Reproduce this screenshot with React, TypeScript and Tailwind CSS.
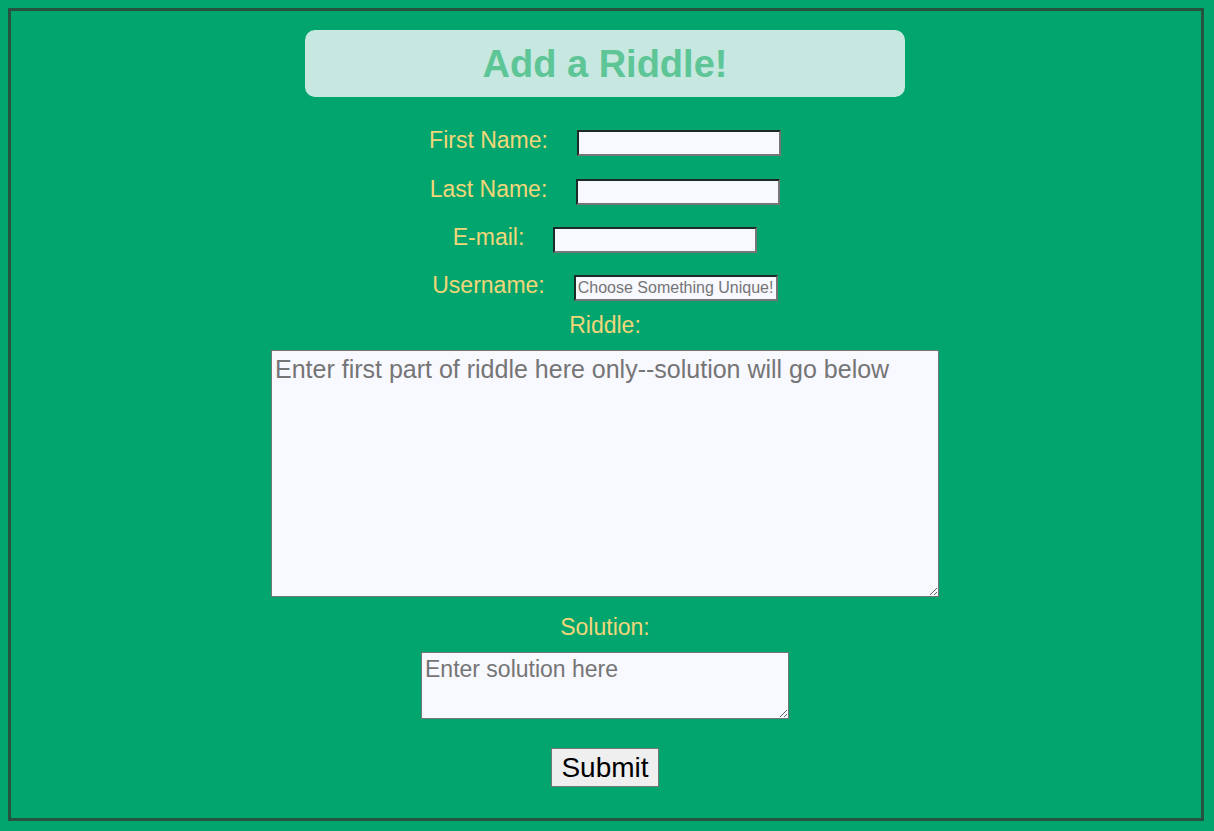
import { useState } from "react";

const labelCls = "text-[23px] leading-[20px] text-[#f1d67a] mb-[6px]";
const inputCls =
    "w-[204px] h-[26px] bg-[#f8f8ff] border-2 border-t-[#1c2b26] border-l-[#1c2b26] border-b-[#767676] border-r-[#767676] px-[2px] text-[16px] text-black placeholder:text-[#757575] outline-none";

function FieldRow({ label, name, placeholder }: { label: string; name: string; placeholder?: string }) {
    return (
        <div className="flex items-center gap-[29px] h-[26px]">
            <label htmlFor={name} className={labelCls}>{label}</label>
            <input id={name} name={name} type="text" placeholder={placeholder} className={inputCls} />
        </div>
    );
}

function App() {
    const [riddle, setRiddle] = useState("");
    const [solution, setSolution] = useState("");

    return (
        <div className="min-h-[831px] bg-[#01a56d] pt-2 pl-2" style={{ fontFamily: '"Liberation Sans", Arial, sans-serif' }}>
            <div className="w-[1196px] h-[813px] border-[3px] border-[#26533f] flex flex-col items-center pt-[19px] pr-[2px]">
                <div className="w-[600px] h-[67px] rounded-[10px] bg-[#c6e8e0] flex items-center justify-center">
                    <h1 className="text-[38px] font-bold text-[#5dc596] leading-none">Add a Riddle!</h1>
                </div>

                <form className="flex flex-col items-center mt-[33px]" onSubmit={(e) => e.preventDefault()}>
                    <div className="flex flex-col items-center gap-[22px]">
                        <FieldRow label="First Name:" name="first" />
                        <div className="mt-[1px]">
                            <FieldRow label="Last Name:" name="last" />
                        </div>
                        <FieldRow label="E-mail:" name="email" />
                        <FieldRow label="Username:" name="username" placeholder="Choose Something Unique!" />
                    </div>

                    <label htmlFor="riddle" className="text-[23px] leading-[26px] text-[#f1d67a] mt-[11px]">Riddle:</label>
                    <textarea
                        id="riddle"
                        value={riddle}
                        onChange={(e) => setRiddle(e.target.value)}
                        placeholder="Enter first part of riddle here only--solution will go below"
                        className="mt-[12px] w-[668px] h-[247px] bg-[#f8f8ff] border border-[#767676] px-[3px] pt-[4px] pb-[2px] text-[25px] leading-[29px] text-black placeholder:text-[#757575] outline-none"
                    />

                    <label htmlFor="solution" className="text-[23px] leading-[26px] text-[#f1d67a] mt-[17px]">Solution:</label>
                    <textarea
                        id="solution"
                        value={solution}
                        onChange={(e) => setSolution(e.target.value)}
                        placeholder="Enter solution here"
                        className="mt-[12px] w-[368px] h-[67px] bg-[#f8f8ff] border border-[#767676] px-[3px] pt-[3px] pb-[1px] text-[23px] leading-[26px] text-black placeholder:text-[#757575] outline-none"
                    />

                    <button type="submit" className="mt-[29px] h-[39px] px-[9px] bg-[#efefef] border border-[#767676] text-[28px] leading-none text-black">
                        Submit
                    </button>
                </form>
            </div>
        </div>
    );
}

export default App;
